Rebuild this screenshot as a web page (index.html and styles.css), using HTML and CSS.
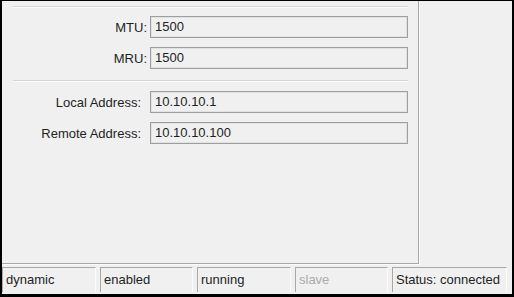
FILE: index.html
```html
<!DOCTYPE html>
<html lang="en">
<head>
  <meta charset="UTF-8" />
  <title>PPP Interface</title>
  <link rel="stylesheet" href="styles.css">
</head>
<body>
  <div class="window">

    <div class="panel">
      <div class="separator first"></div>

      <div class="field">
        <label>MTU:</label>
        <div class="input">1500</div>
      </div>
      <div class="field">
        <label>MRU:</label>
        <div class="input">1500</div>
      </div>

      <div class="separator"></div>

      <div class="field address">
        <label>Local Address:</label>
        <div class="input">10.10.10.1</div>
      </div>
      <div class="field address">
        <label>Remote Address:</label>
        <div class="input">10.10.10.100</div>
      </div>
    </div>

    <div class="status-bar">
      <div class="cell">dynamic</div>
      <div class="cell">enabled</div>
      <div class="cell">running</div>
      <div class="cell disabled">slave</div>
      <div class="cell wide">Status: connected</div>
    </div>

  </div>
</body>
</html>
```

FILE: styles.css
```css
body {
  margin: 0;
  padding: 0;
  background-color: #000;
  font-family: 'Liberation Sans', Arial, sans-serif;
  font-size: 13px;
  color: #1e1e1e;
}

.window {
  width: 514px;
  height: 297px;
  box-sizing: border-box;
  border-style: solid;
  border-color: #000;
  border-width: 1px 2px 3px 2px;
  background-color: #f0f0f0;
  display: flex;
  flex-direction: column;
}

.panel {
  width: 417px;
  height: 263px;
  box-sizing: border-box;
  padding: 0 10px 0 11px;
  border-right: 1px solid #a8a8a8;
  border-bottom: 1px solid #a8a8a8;
  box-shadow: 1px 1px 0 #fbfbfb;
}

.separator {
  height: 0;
  border-top: 1px solid #d6d6d6;
  border-bottom: 1px solid #fbfbfb;
  margin: 11px 0 9px;
}

.separator.first {
  margin: 5px 0 8px;
}

.field {
  display: flex;
  align-items: center;
  margin-bottom: 9px;
}

.field label {
  width: 134px;
  margin-right: 3px;
  text-align: right;
}

.field.address label {
  width: 128px;
  margin-right: 9px;
}

.input {
  flex: 1;
  height: 22px;
  box-sizing: border-box;
  padding-left: 4px;
  line-height: 20px;
  border: 1px solid #9e9e9e;
  box-shadow: inset 0 0 0 1px #e2e2e2;
  background-color: #f0f0f0;
}

.status-bar {
  display: flex;
  gap: 4px;
  margin-top: 3px;
  height: 25px;
}

.cell {
  width: 94px;
  box-sizing: border-box;
  padding-left: 3px;
  line-height: 24px;
  border-top: 1px solid #a8a8a8;
  border-left: 1px solid #a8a8a8;
  border-right: 1px solid #fbfbfb;
}

.cell:nth-child(2),
.cell:nth-child(4) {
  width: 93px;
}

.cell.wide {
  width: 115px;
}

.cell.disabled {
  color: #ababab;
}
```
